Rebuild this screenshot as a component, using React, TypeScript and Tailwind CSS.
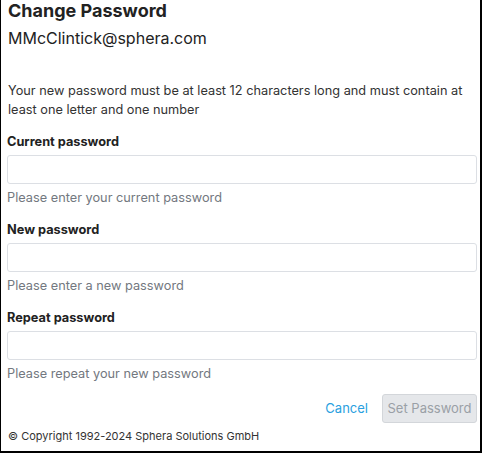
import React from 'react';

function Field({ label, hint }: { label: string; hint: string }) {
  return (
    <div className="mt-[13px]">
      <label className="block text-[12.75px] font-bold leading-[19px] text-[#222]">{label}</label>
      <input
        type="password"
        className="mt-[4px] block h-[29px] w-full rounded-[3px] border border-[#dcdfe4] bg-white px-2 outline-none"
      />
      <div className="mt-[4px] text-[12.75px] leading-[19px] text-[#737880]">{hint}</div>
    </div>
  );
}

export default function App() {
  return (
    <div
      className="h-[453px] w-[482px] border-b-2 border-l border-r-2 border-black bg-white text-[#222]"
      style={{ fontFamily: 'Inter, "Noto Sans", sans-serif' }}
    >
      <div className="pl-[6px] pr-[3px]">
        <h1 className="pl-px text-[18px] font-bold leading-[22px]">Change Password</h1>
        <div className="mt-[4px] pl-px text-[16px] leading-[24px]">MMcClintick@sphera.com</div>
        <p className="mt-[31px] pl-px text-[12.75px] leading-[19px] text-[#333]">
          Your new password must be at least 12 characters long and must contain at least one letter and one number
        </p>
        <Field label="Current password" hint="Please enter your current password" />
        <Field label="New password" hint="Please enter a new password" />
        <Field label="Repeat password" hint="Please repeat your new password" />
        <div className="mt-[11px] flex items-center justify-end gap-[14px]">
          <button type="button" className="text-[13px] text-[#2a9fe0]">
            Cancel
          </button>
          <button
            type="button"
            className="h-[29px] w-[95px] rounded-[3px] border border-[#d3d6da] bg-[#e5e7ea] text-[13px] text-[#9aa0a6]"
          >
            Set Password
          </button>
        </div>
        <div className="mt-[5px] pl-px text-[11px] leading-[16px] text-[#333]">© Copyright 1992-2024 Sphera Solutions GmbH</div>
      </div>
    </div>
  );
}
